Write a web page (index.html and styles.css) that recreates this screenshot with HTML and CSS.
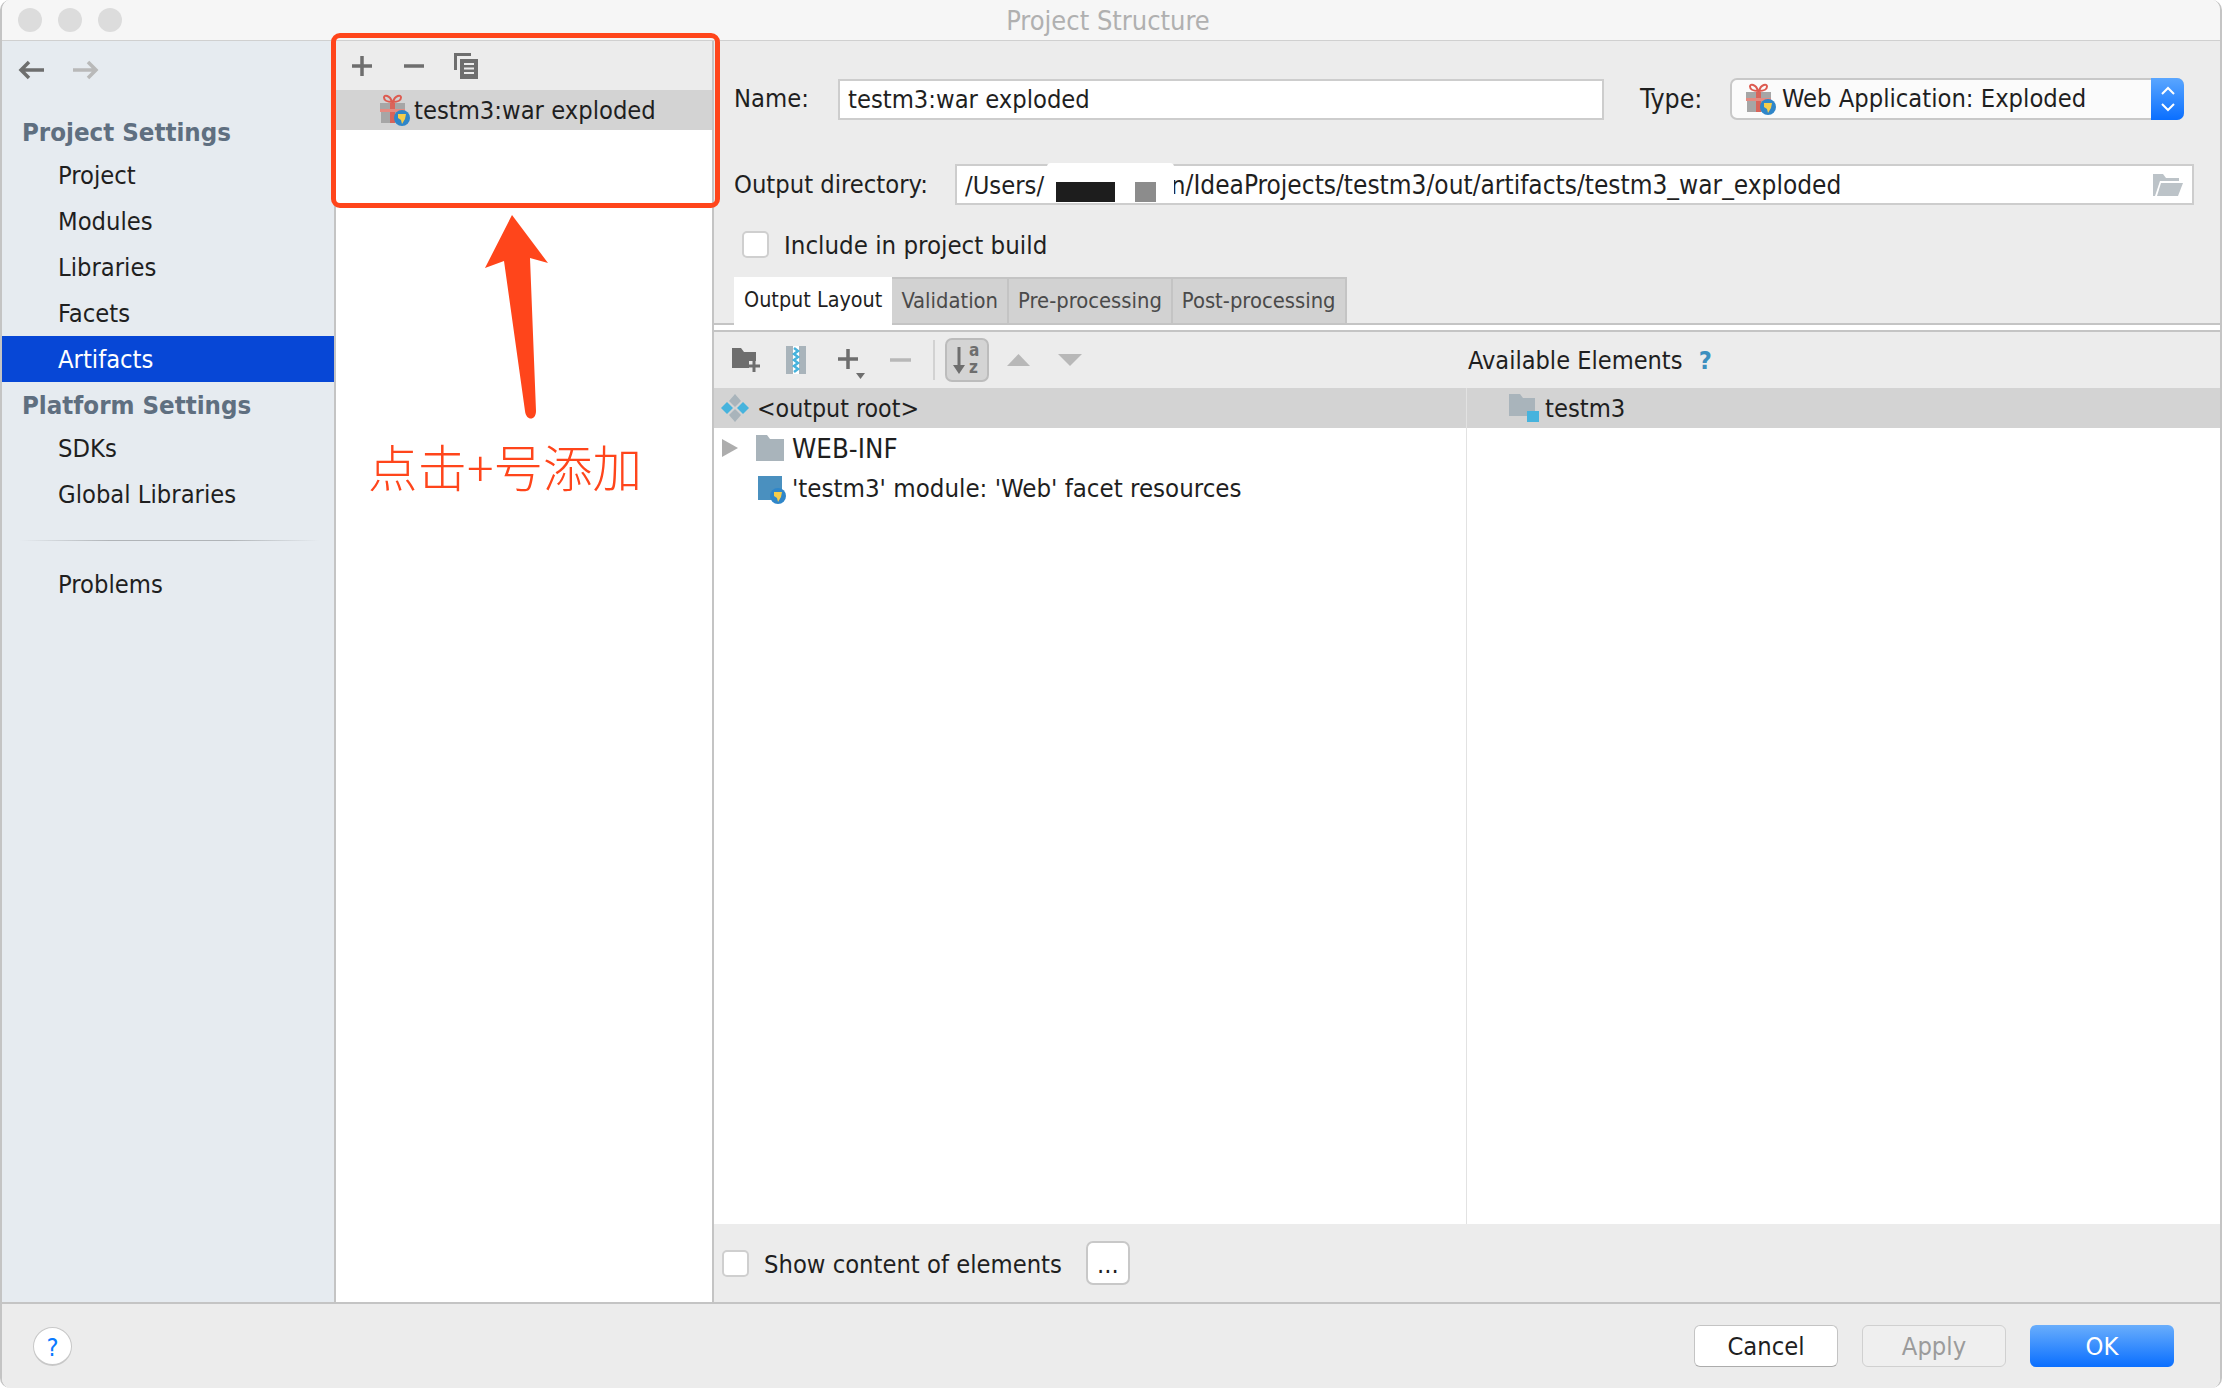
FILE: index.html
```html
<!DOCTYPE html>
<html lang="en">
<head>
    <meta charset="UTF-8">
    <meta name="viewport" content="width=device-width, initial-scale=1.0">
    <title>Project Structure</title>
    <link rel="stylesheet" href="styles.css">
</head>
<body>
    <svg class="sprite" width="0" height="0">
        <symbol id="gift" viewBox="0 0 30 32">
            <path d="M12 8C7 8 4 6 4 3.500C4 0.500 10 1 12 8ZM13 8C18 8 21 6 21 3.500C21 0.500 15 1 13 8Z" fill="none" stroke="#dd5b50" stroke-width="2"/>
            <rect x="0" y="9" width="25" height="8" fill="#a6a6a6"/>
            <rect x="1" y="18" width="23" height="11" fill="#a6a6a6"/>
            <rect x="10" y="9" width="5" height="20" fill="#d9645a"/>
            <rect x="0" y="15" width="25" height="3" fill="#e58a80"/>
            <circle cx="22" cy="24" r="8" fill="#2f86c9"/>
            <path d="M18 20H26L25 25L22 30L21 26L18 24Z" fill="#f5cd4b"/>
        </symbol>
        <symbol id="globe" viewBox="0 0 16 16">
            <circle cx="8" cy="8" r="8" fill="#2f86c9"/>
            <path d="M4 4H12L11 9L8 14L7 10L4 8Z" fill="#f5cd4b"/>
        </symbol>
    </svg>

    <div class="window">
        <div class="titlebar">
            <div class="lights"><span></span><span></span><span></span></div>
            <div class="title">Project Structure</div>
        </div>

        <div class="main">
            <div class="sidebar">
                <div class="nav-arrows">
                    <svg width="26" height="20" viewBox="0 0 26 20"><path d="M11 2L3 10L11 18M3 10H26" fill="none" stroke="#6e6e6e" stroke-width="3.500"/></svg>
                    <svg width="26" height="20" viewBox="0 0 26 20"><path d="M15 2L23 10L15 18M0 10H23" fill="none" stroke="#b9b9b9" stroke-width="3.500"/></svg>
                </div>
                <div class="side-head">Project Settings</div>
                <div class="side-item">Project</div>
                <div class="side-item">Modules</div>
                <div class="side-item">Libraries</div>
                <div class="side-item">Facets</div>
                <div class="side-item active">Artifacts</div>
                <div class="side-head">Platform Settings</div>
                <div class="side-item">SDKs</div>
                <div class="side-item">Global Libraries</div>
                <div class="side-sep"></div>
                <div class="side-item">Problems</div>
            </div>

            <div class="artifacts">
                <div class="art-toolbar">
                    <svg width="20" height="20" viewBox="0 0 20 20"><path d="M10 0V20M0 10H20" stroke="#6e6e6e" stroke-width="3.500"/></svg>
                    <svg width="20" height="20" viewBox="0 0 20 20"><path d="M0 10H20" stroke="#6e6e6e" stroke-width="3.500"/></svg>
                    <svg width="24" height="26" viewBox="0 0 24 26"><path d="M0 0H17V3H3V17H0Z" fill="#6e6e6e"/><path d="M6 6H24V26H6Z" fill="#6e6e6e"/><path d="M10 11H20M10 15.500H20M10 20H20" stroke="#ececec" stroke-width="2"/></svg>
                </div>
                <div class="art-row">
                    <svg class="gift" width="30" height="32"><use href="#gift"/></svg>
                    <span>testm3:war exploded</span>
                </div>
            </div>

            <div class="details">
                <div class="form-row name-row">
                    <label class="name-label">Name:</label>
                    <div class="field name-field">testm3:war exploded</div>
                    <label class="type-label">Type:</label>
                    <div class="combo">
                        <svg width="30" height="32"><use href="#gift"/></svg>
                        <span class="combo-text">Web Application: Exploded</span>
                        <span class="combo-btn">
                            <svg width="16" height="28" viewBox="0 0 16 28"><path d="M2 9L8 3L14 9M2 19L8 25L14 19" fill="none" stroke="#fff" stroke-width="2"/></svg>
                        </span>
                    </div>
                </div>

                <div class="form-row dir-row">
                    <label>Output directory:</label>
                    <div class="field dir-field">
                        <span>/Users/</span><span class="dir-hidden">n</span><span class="dir-rest">/IdeaProjects/testm3/out/artifacts/testm3_war_exploded</span>
                        <div class="blur"><span class="blot-black"></span><span class="blot-gray"></span></div>
                        <svg class="folder-open" width="30" height="22" viewBox="0 0 30 22"><path d="M0 0H10L13 4H26V7H7L2 22H0Z" fill="#bcc3c8"/><path d="M8 9H30L25 22H4Z" fill="#bcc3c8"/></svg>
                    </div>
                </div>

                <div class="check-row">
                    <span class="checkbox"></span>
                    <span class="check-label">Include in project build</span>
                </div>

                <div class="tabs">
                    <div class="tab current">Output Layout</div>
                    <div class="tab">Validation</div>
                    <div class="tab">Pre-processing</div>
                    <div class="tab">Post-processing</div>
                </div>

                <div class="layout-panel">
                    <div class="layout-toolbar">
                        <svg class="tb-folder" width="28" height="24" viewBox="0 0 28 24"><path d="M0 0H9L12 4H24V13H17V20H0Z" fill="#6e6e6e"/><path d="M22 12V24M16 18H28" stroke="#6e6e6e" stroke-width="3"/></svg>
                        <svg class="tb-zip" width="20" height="28" viewBox="0 0 20 28"><path d="M0 0H20V28H0Z" fill="#a9b4bb"/><path d="M7 0H13V28H7Z" fill="#ffffff"/><path d="M8 2L12 5L8 8L12 11L8 14L12 17L8 20L12 23L8 26" fill="none" stroke="#46b3dd" stroke-width="2.500"/></svg>
                        <svg class="tb-plus" width="30" height="30" viewBox="0 0 30 30"><path d="M10 0V20M0 10H20" stroke="#6e6e6e" stroke-width="3.500"/><path d="M18 24H27L22.500 30Z" fill="#6e6e6e"/></svg>
                        <svg class="tb-minus" width="21" height="4" viewBox="0 0 21 4"><path d="M0 2H21" stroke="#b8b8b8" stroke-width="3.500"/></svg>
                        <span class="tb-sep"></span>
                        <span class="tb-sort">
                            <svg width="28" height="32" viewBox="0 0 28 32"><path d="M6 3V24" stroke="#6e6e6e" stroke-width="3"/><path d="M0 21H12L6 30Z" fill="#6e6e6e"/><text x="16" y="12" class="sort-a">a</text><text x="16" y="29" class="sort-z">z</text></svg>
                        </span>
                        <svg class="tb-up" width="23" height="12" viewBox="0 0 23 12"><path d="M0 12L11.500 0L23 12Z" fill="#b8b8b8"/></svg>
                        <svg class="tb-down" width="24" height="12" viewBox="0 0 24 12"><path d="M0 0H24L12 12Z" fill="#b8b8b8"/></svg>
                        <div class="avail">Available Elements <span class="avail-q">?</span></div>
                    </div>

                    <div class="trees">
                        <div class="tree-left">
                            <div class="tree-row selected root-row">
                                <svg width="30" height="28" viewBox="0 0 30 28"><path d="M15 0L21 7L15 13L9 7Z" fill="#a9b4bb"/><path d="M15 15L21 21L15 28L9 21Z" fill="#a9b4bb"/><path d="M7 8L13 14L7 20L1 14Z" fill="#46b3dd"/><path d="M23 8L29 14L23 20L17 14Z" fill="#46b3dd"/></svg>
                                <span>&lt;output root&gt;</span>
                            </div>
                            <div class="tree-row web-row">
                                <svg class="expander" width="16" height="18" viewBox="0 0 16 18"><path d="M0 0L16 9L0 18Z" fill="#adadad"/></svg>
                                <svg width="28" height="26" viewBox="0 0 28 26"><path d="M0 0H11L14 4H28V26H0Z" fill="#a9b4bb"/></svg>
                                <span>WEB-INF</span>
                            </div>
                            <div class="tree-row module-row">
                                <span class="module-icon"><svg width="16" height="16"><use href="#globe"/></svg></span>
                                <span>'testm3' module: 'Web' facet resources</span>
                            </div>
                        </div>
                        <div class="tree-right">
                            <div class="tree-row selected avail-row">
                                <svg width="30" height="28" viewBox="0 0 30 28"><path d="M0 0H11L14 4H26V22H0Z" fill="#a9b4bb"/><rect x="18" y="17" width="12" height="11" fill="#46b3dd"/></svg>
                                <span>testm3</span>
                            </div>
                        </div>
                    </div>

                    <div class="show-row">
                        <span class="checkbox"></span>
                        <span class="show-label">Show content of elements</span>
                        <span class="dots-btn">...</span>
                    </div>
                </div>
            </div>
        </div>

        <div class="footer">
            <span class="help">?</span>
            <div class="footer-buttons">
                <span class="btn">Cancel</span>
                <span class="btn disabled">Apply</span>
                <span class="btn primary">OK</span>
            </div>
        </div>

        <svg class="red-arrow" width="70" height="210" viewBox="0 0 70 210">
            <path d="M32 0L68 48L50 43L56 196C56 206 46 206 45 196L24 46L5 53Z" fill="#ff451b"/>
        </svg>
        <div class="red-box"></div>
        <div class="red-note">点击+号添加</div>
    </div>
</body>
</html>
```

FILE: styles.css
```css
body {
    margin: 0;
    width: 2222px;
    height: 1388px;
    overflow: hidden;
    background: #ffffff;
    font-family: "DejaVu Sans Condensed", "DejaVu Sans", sans-serif;
    font-stretch: condensed;
    font-size: 25.3px;
    color: #1f1f1f;
}

.sprite {
    position: absolute;
}

.window {
    position: relative;
    display: flex;
    flex-direction: column;
    height: 1388px;
    box-sizing: border-box;
    border-left: 2px solid #c4c4c4;
    border-right: 2px solid #c4c4c4;
    border-radius: 10px;
    overflow: hidden;
}

/* title bar */
.titlebar {
    display: flex;
    align-items: center;
    justify-content: center;
    position: relative;
    height: 41px;
    flex: none;
    background: #f6f6f6;
    border-bottom: 1px solid #d0d0d0;
    box-sizing: border-box;
}

.lights {
    position: absolute;
    left: 16px;
    top: 8px;
    display: flex;
    gap: 16px;
}

.lights span {
    width: 24px;
    height: 24px;
    border-radius: 50%;
    background: #dcdcdc;
}

.title {
    color: #b0b0b0;
    font-size: 27px;
    margin: 1px 0 0 -6px;
}

.main {
    display: flex;
    flex: 1;
    min-height: 0;
}

/* left list */
.sidebar {
    width: 332px;
    flex: none;
    background: #e6ebf0;
    border-right: 2px solid #c4c4c4;
}

.nav-arrows {
    display: flex;
    gap: 29px;
    height: 68px;
    padding: 19px 0 0 16px;
    box-sizing: border-box;
}

.side-head {
    height: 43px;
    line-height: 47px;
    padding-left: 20px;
    font-weight: bold;
    font-size: 25.6px;
    color: #5f6f80;
}

.side-item {
    height: 46px;
    line-height: 47px;
    padding-left: 56px;
}

.side-item.active {
    background: #0747d6;
    color: #ffffff;
}

.side-sep {
    height: 1px;
    margin: 23px 14px 20px 18px;
    background: linear-gradient(to right, #e6ebf0, #b0b4b8 30%, #b0b4b8 70%, #e6ebf0);
}

/* artifacts column */
.artifacts {
    width: 376px;
    flex: none;
    background: #ffffff;
    border-right: 2px solid #c4c4c4;
}

.art-toolbar {
    display: flex;
    align-items: center;
    height: 49px;
    padding-left: 16px;
    background: #ececec;
}

.art-toolbar svg:nth-child(2) {
    margin-left: 32px;
}

.art-toolbar svg:nth-child(3) {
    margin-left: 30px;
}

.art-row {
    display: flex;
    align-items: center;
    height: 40px;
    background: #d3d3d3;
    padding-left: 44px;
}

.art-row span {
    margin-left: 4px;
}

/* details */
.details {
    flex: 1;
    min-width: 0;
    display: flex;
    flex-direction: column;
    background: #ececec;
}

.form-row {
    display: flex;
    align-items: center;
    padding-left: 20px;
}

.name-row {
    margin-top: 37px;
    padding-right: 36px;
    height: 42px;
}

.name-label {
    width: 104px;
    flex: none;
    padding-bottom: 2px;
}

.field {
    height: 41px;
    line-height: 39px;
    box-sizing: border-box;
    border: 2px solid #cdcdcd;
    background: #ffffff;
    padding-left: 8px;
}

.name-field {
    width: 766px;
    flex: none;
    line-height: 37px;
}

.type-label {
    margin-left: 36px;
    width: 90px;
    flex: none;
    padding-bottom: 2px;
    font-size: 26.5px;
}

.combo {
    flex: 1;
    height: 42px;
    display: flex;
    align-items: center;
    box-sizing: border-box;
    border: 2px solid #c8c8c8;
    border-radius: 7px;
    background: #fbfbfb;
    padding-left: 14px;
    position: relative;
}

.combo-text {
    margin-left: 6px;
    padding-bottom: 1px;
}

.combo-btn {
    position: absolute;
    right: -2px;
    top: -2px;
    width: 33px;
    height: 42px;
    display: flex;
    align-items: center;
    justify-content: center;
    border-radius: 0 7px 7px 0;
    background: linear-gradient(#5aa6ff, #0a6fff);
}

.dir-row {
    margin-top: 44px;
    padding-right: 26px;
}

.dir-row label {
    width: 221px;
    flex: none;
}

.dir-field {
    flex: 1;
    position: relative;
    white-space: nowrap;
}

.dir-hidden {
    margin-left: 127px;
}

.dir-rest {
    font-size: 26px;
}

.blur {
    position: absolute;
    left: 90px;
    top: -3px;
    width: 127px;
    height: 40px;
    background: #ffffff;
    border-radius: 4px;
}

.blot-black {
    position: absolute;
    left: 9px;
    top: 19px;
    width: 59px;
    height: 20px;
    background: #1d1d1d;
}

.blot-gray {
    position: absolute;
    left: 88px;
    top: 19px;
    width: 21px;
    height: 20px;
    background: #8c8c8c;
}

.folder-open {
    position: absolute;
    right: 9px;
    top: 8px;
}

.check-row {
    display: flex;
    align-items: center;
    gap: 15px;
    margin: 25px 0 0 28px;
}

.check-label {
    font-size: 25.6px;
    line-height: 27px;
    padding-top: 2px;
}

.checkbox {
    width: 27px;
    height: 27px;
    flex: none;
    box-sizing: border-box;
    border: 2px solid #cfcfcf;
    border-radius: 5px;
    background: #ffffff;
}

/* tabs */
.tabs {
    display: flex;
    height: 48px;
    margin-top: 18px;
    padding-left: 20px;
    box-sizing: border-box;
    border-bottom: 2px solid #c4c4c4;
}

.tab {
    height: 46px;
    line-height: 44px;
    box-sizing: border-box;
    padding: 0 9px;
    font-size: 21.8px;
    color: #4a4a4a;
    background: #d2d2d2;
    border: 2px solid #c4c4c4;
    border-left-width: 0;
    border-bottom: 0;
}

.tab.current {
    background: #ffffff;
    color: #1f1f1f;
    border: 0;
    height: 48px;
    padding: 0 10px;
    font-size: 21.4px;
    line-height: 46px;
}

.layout-panel {
    flex: 1;
    min-height: 0;
    display: flex;
    flex-direction: column;
    margin-top: 5px;
    box-shadow: 0 -5px 0 #ffffff;
    border-top: 2px solid #c4c4c4;
}

.layout-toolbar {
    display: flex;
    align-items: center;
    height: 56px;
    flex: none;
    padding-left: 18px;
}

.tb-zip {
    margin-left: 26px;
}

.tb-plus {
    margin: 0 0 -8px 32px;
}

.tb-minus {
    margin-left: 22px;
}

.tb-sep {
    width: 2px;
    height: 40px;
    margin-left: 22px;
    background: #d2d2d2;
}

.tb-sort {
    width: 44px;
    height: 44px;
    margin-left: 10px;
    display: flex;
    align-items: center;
    justify-content: center;
    box-sizing: border-box;
    border: 2px solid #bcbcbc;
    border-radius: 7px;
    background: #d4d4d4;
}

.sort-a,
.sort-z {
    font-size: 17px;
    font-weight: bold;
    fill: #6e6e6e;
}

.tb-up {
    margin-left: 18px;
}

.tb-down {
    margin-left: 28px;
}

.avail {
    margin-left: 386px;
    font-size: 25.1px;
}

.avail-q {
    margin-left: 9px;
    color: #3d8fbf;
    font-weight: bold;
}

.trees {
    flex: 1;
    min-height: 0;
    display: flex;
    background: #ffffff;
}

.tree-left {
    width: 753px;
    flex: none;
    box-sizing: border-box;
    border-right: 1px solid #e2e2e2;
}

.tree-right {
    flex: 1;
}

.tree-row {
    display: flex;
    align-items: center;
    height: 40px;
}

.selected {
    background: #d3d3d3;
}

.root-row {
    padding-left: 6px;
    gap: 7px;
    font-size: 24.7px;
}

.web-row {
    padding-left: 8px;
    gap: 18px;
    height: 40px;
}

.web-row span {
    margin-left: -10px;
    font-size: 27.4px;
}

.module-row {
    padding-left: 44px;
    gap: 10px;
    font-size: 25.6px;
}

.module-icon {
    position: relative;
    width: 24px;
    height: 24px;
    background: #4a90bf;
}

.module-icon svg {
    position: absolute;
    right: -4px;
    bottom: -4px;
}

.avail-row {
    padding-left: 42px;
    gap: 6px;
}

.show-row {
    display: flex;
    align-items: center;
    height: 78px;
    flex: none;
    padding-left: 8px;
}

.show-label {
    margin-left: 15px;
    padding-top: 2px;
}

.dots-btn {
    width: 44px;
    height: 44px;
    margin-left: 24px;
    line-height: 44px;
    text-align: center;
    box-sizing: border-box;
    border: 2px solid #c8c8c8;
    border-radius: 7px;
    background: #ffffff;
}

/* footer */
.footer {
    display: flex;
    align-items: center;
    justify-content: space-between;
    height: 86px;
    flex: none;
    box-sizing: border-box;
    border-top: 2px solid #c4c4c4;
    padding: 0 46px 0 31px;
    background: #ececec;
}

.help {
    width: 39px;
    height: 39px;
    line-height: 39px;
    text-align: center;
    box-sizing: border-box;
    border: 1px solid #c8c8c8;
    border-bottom-width: 2px;
    border-radius: 50%;
    background: #ffffff;
    color: #0a7aff;
}

.footer-buttons {
    display: flex;
    gap: 24px;
}

.btn {
    width: 144px;
    height: 42px;
    line-height: 42px;
    text-align: center;
    box-sizing: border-box;
    border: 1px solid #c4c4c4;
    border-bottom-color: #acacac;
    border-radius: 6px;
    background: #ffffff;
}

.btn.disabled {
    background: #efefef;
    color: #9b9b9b;
    border-color: #d0d0d0;
}

.btn.primary {
    border: 0;
    line-height: 44px;
    background: linear-gradient(#69aefc, #0a6fff);
    color: #ffffff;
}

/* annotation drawn over the window */
.red-box {
    position: absolute;
    left: 329px;
    top: 33px;
    width: 389px;
    height: 175px;
    box-sizing: border-box;
    border: 5px solid #ff451b;
    border-radius: 9px;
}

.red-arrow {
    position: absolute;
    left: 478px;
    top: 215px;
}

.red-note {
    position: absolute;
    left: 366px;
    top: 433px;
    font-family: "Noto Sans CJK SC", sans-serif;
    font-stretch: normal;
    font-weight: 300;
    font-size: 49.5px;
    line-height: 66px;
    color: #ff451b;
}
```
